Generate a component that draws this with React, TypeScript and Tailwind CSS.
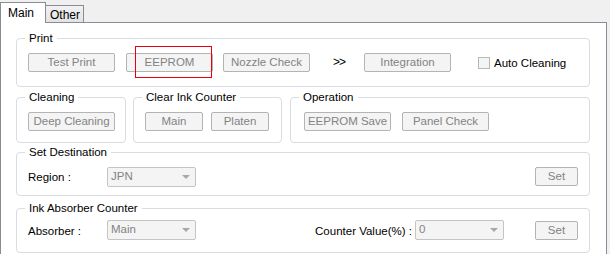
import React from "react";

const font = { fontFamily: '"Liberation Sans", Arial, sans-serif' };

function Btn({ label, w, className = "" }: { label: string; w: number; className?: string }) {
  return (
    <div
      className={`h-[19px] flex items-center justify-center rounded-[2px] border border-[#b4b4b4] bg-[#f4f4f4] text-[11.5px] text-[#838383] leading-none ${className}`}
      style={{ width: w }}
    >
      {label}
    </div>
  );
}

function Combo({ value, w }: { value: string; w: number }) {
  return (
    <div
      className="h-[20px] flex items-center justify-between rounded-[2px] border border-[#c4c4c4] bg-[#f4f4f4] pl-[3px] pr-[5px] text-[11.5px] text-[#838383] leading-none"
      style={{ width: w }}
    >
      <span>{value}</span>
      <svg width="8" height="4" viewBox="0 0 8 4">
        <path d="M0 0 H8 L4 4 Z" fill="#a8a8a8" />
      </svg>
    </div>
  );
}

function Group({
  title,
  className = "",
  children,
}: {
  title: string;
  className?: string;
  children?: React.ReactNode;
}) {
  return (
    <div className={`relative rounded-[4px] border border-[#d7dde2] ${className}`}>
      <span className="absolute left-[8px] top-[-8px] bg-white px-[4px] text-[11.5px] leading-[14px] text-black">
        {title}
      </span>
      {children}
    </div>
  );
}

export default function App() {
  return (
    <div className="w-[610px] h-[254px] bg-[#f0f0f0] overflow-hidden text-[11.5px]" style={font}>
      {/* tabs */}
      <div className="relative h-[22px] flex items-end">
        <div className="relative z-10 mb-[-1px] h-[21px] w-[46px] border border-b-0 border-[#898c95] bg-white pl-[7px] pt-[3px] text-[12px] leading-[14px] text-black">
          Main
        </div>
        <div className="h-[17px] w-[38px] border border-l-0 border-b-0 border-[#898c95] bg-gradient-to-b from-[#f2f2f2] to-[#e3e3e3] pl-[4px] pt-[2px] text-[12px] leading-[14px] text-black">
          Other
        </div>
      </div>
      {/* panel */}
      <div className="h-[240px] w-[607px] border border-b-0 border-[#898c95] bg-white pl-[15px] pt-[15px]">
        {/* Print */}
        <Group title="Print" className="w-[574px] h-[49px] flex items-start pt-[14px] pl-[11px]">
          <Btn label="Test Print" w={87} />
          <Btn label="EEPROM" w={87} className="ml-[11px]" />
          <Btn label="Nozzle Check" w={87} className="ml-[10px]" />
          <span className="ml-[23px] mt-[2px] text-[12px] leading-[14px] text-black tracking-[-1px]">&gt;&gt;</span>
          <Btn label="Integration" w={87} className="ml-[19px]" />
          <div className="ml-[27px] mt-[3px] flex items-center">
            <div className="h-[12px] w-[12px] border border-[#b8b8b8] bg-[#f4f4f4]" />
            <span className="ml-[4px] text-[11.5px] leading-[14px] text-black">Auto Cleaning</span>
          </div>
          {/* red highlight */}
          <div className="absolute left-[118px] top-[7px] h-[32px] w-[77px] border border-[#e8000b]" />
        </Group>

        {/* row 2 */}
        <div className="mt-[10px] flex">
          <Group title="Cleaning" className="w-[110px] h-[46px] pt-[14px] pl-[11px]">
            <Btn label="Deep Cleaning" w={87} />
          </Group>
          <Group title="Clear Ink Counter" className="ml-[7px] w-[149px] h-[46px] flex pt-[14px] pl-[11px]">
            <Btn label="Main" w={58} />
            <Btn label="Platen" w={58} className="ml-[8px]" />
          </Group>
          <Group title="Operation" className="ml-[8px] w-[300px] h-[46px] flex pt-[14px] pl-[13px]">
            <Btn label="EEPROM Save" w={87} />
            <Btn label="Panel Check" w={87} className="ml-[11px]" />
          </Group>
        </div>

        {/* Set Destination */}
        <Group title="Set Destination" className="mt-[9px] w-[574px] h-[44px] flex items-start pt-[14px] pl-[11px]">
          <span className="mt-[3px] w-[79px] text-[11.5px] leading-[14px] text-black">Region :</span>
          <Combo value="JPN" w={89} />
          <div className="flex-1" />
          <Btn label="Set" w={43} className="mr-[11px]" />
        </Group>

        {/* Ink Absorber Counter */}
        <Group title="Ink Absorber Counter" className="mt-[12px] w-[574px] h-[45px] flex items-start pt-[11px] pl-[11px]">
          <span className="mt-[4px] w-[79px] text-[11.5px] leading-[14px] text-black">Absorber :</span>
          <Combo value="Main" w={89} />
          <div className="flex-1" />
          <span className="mr-[3px] mt-[4px] text-[11.5px] leading-[14px] text-black">Counter Value(%) :</span>
          <Combo value="0" w={89} />
          <Btn label="Set" w={43} className="ml-[31px] mr-[11px] mt-[1px]" />
        </Group>
      </div>
    </div>
  );
}
